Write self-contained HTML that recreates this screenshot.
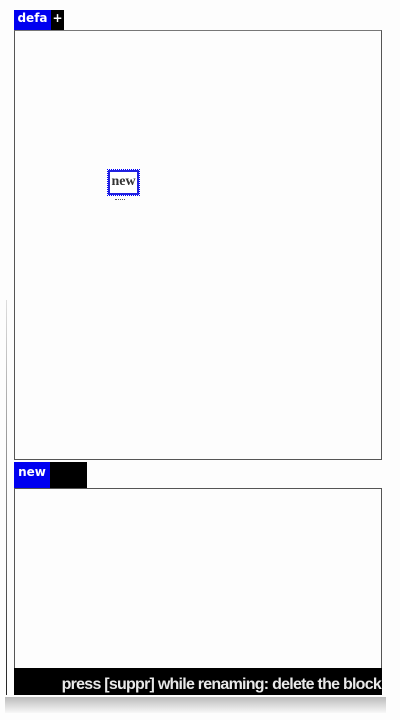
<!DOCTYPE html>
<html><head><style>
body{margin:0;width:400px;height:720px;background:#fdfdfd;position:relative;overflow:hidden;font-family:"DejaVu Sans","Liberation Sans",sans-serif}
div{position:absolute;box-sizing:border-box}
.tab{color:#fff;font-weight:bold;font-size:12px;text-align:center}
</style></head><body>
<div style="left:6px;top:300px;width:1px;height:395px;background:linear-gradient(#ddd,#222)"></div>
<div class="tab" style="left:14px;top:10px;width:37px;height:20px;background:#0000f0;line-height:16px">defa</div>
<div class="tab" style="left:51px;top:10px;width:13px;height:20px;background:#000;line-height:16px">+</div>
<div style="left:14px;top:30px;width:368px;height:430px;border:1px solid #555;border-top-color:#777"></div>
<div style="left:108px;top:170px;width:31px;height:25px;border:2px solid #2020e0;outline:1px dotted #00f;background:#fff;font-family:'Liberation Serif',serif;font-size:14px;font-weight:bold;text-align:center;line-height:20px;color:#333">new</div>
<div style="left:115px;top:196px;width:10px;height:4px;border-bottom:1px dotted #555"></div>
<div class="tab" style="left:14px;top:462px;width:36px;height:26px;background:#0000f0;line-height:20px">new</div>
<div style="left:50px;top:462px;width:37px;height:26px;background:#000"></div>
<div style="left:14px;top:488px;width:368px;height:181px;border:1px solid #555"></div>
<div style="left:14px;top:668px;width:368px;height:27px;background:#000;color:#e8e8e8;font-size:16px;font-weight:bold;font-family:'Liberation Sans',sans-serif;text-align:right;padding-right:1px;line-height:33px;letter-spacing:-0.75px;white-space:nowrap;overflow:hidden">press [suppr] while renaming: delete the block</div>
<div style="left:5px;top:697px;width:381px;height:16px;background:linear-gradient(#bbb,#f8f8f8)"></div>
</body></html>
